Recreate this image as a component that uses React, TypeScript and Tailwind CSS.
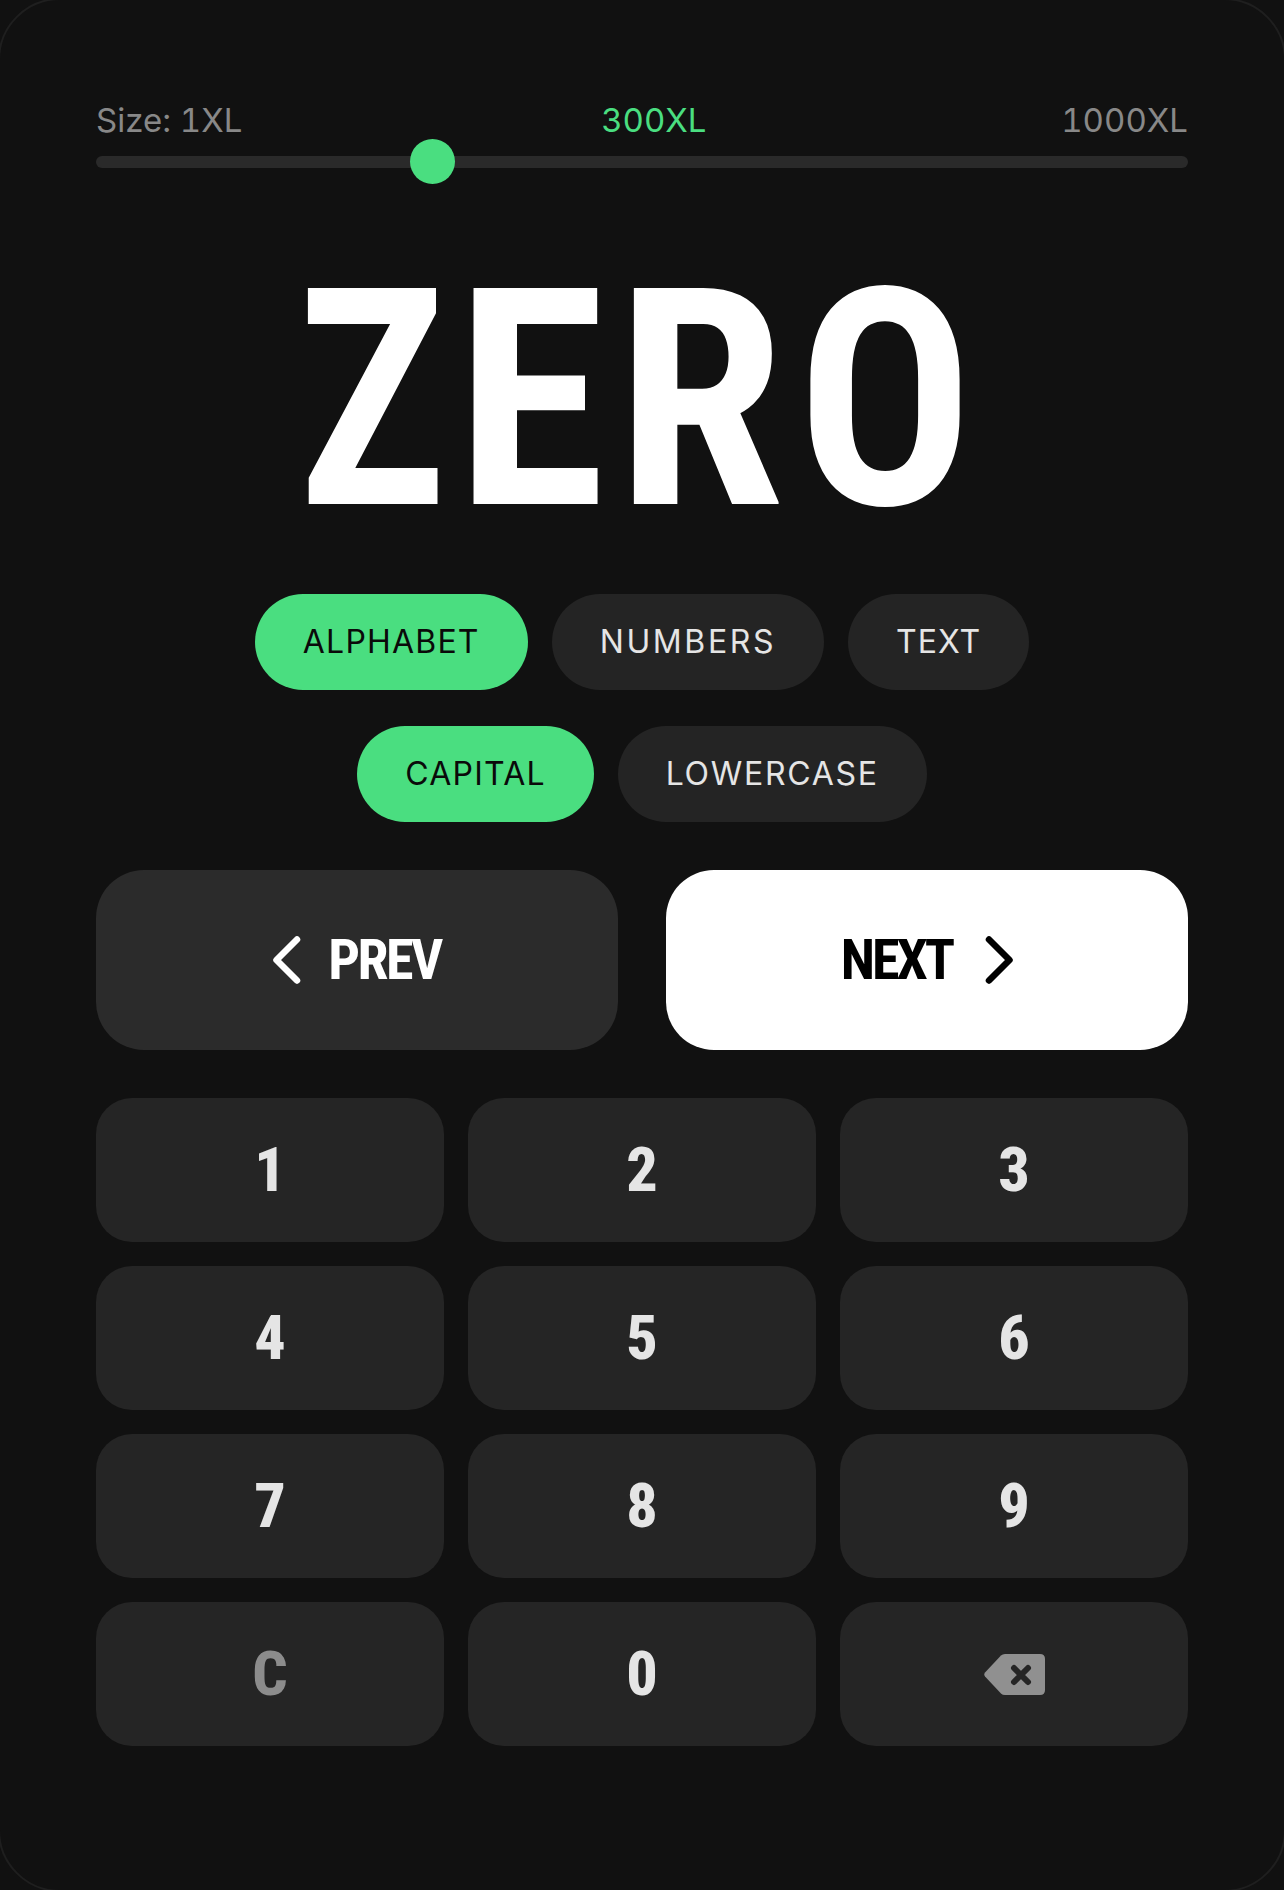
const Pill = ({ label, active, track }: { label: string; active?: boolean; track: string }) => (
  <button
    className={
      "h-24 px-12 rounded-full text-[32px] leading-none font-normal font-['Inter',sans-serif] " +
      track +
      " " +
      (active ? "bg-[#4ade80] text-[#0a0a0a]" : "bg-[#242424] text-[#e5e5e5]")
    }
  >
    {label}
  </button>
);

const Key = ({ children, muted }: { children: React.ReactNode; muted?: boolean }) => (
  <button
    className={
      "h-36 rounded-[36px] bg-[#252525] flex items-center justify-center text-[62px] leading-none font-extrabold font-['Roboto',sans-serif] [font-stretch:75%] " +
      (muted ? "text-[#8c8c8c]" : "text-[#e5e5e5]")
    }
  >
    {children}
  </button>
);

export default function App() {
  return (
    <div className="w-[1284px] h-[1890px] overflow-hidden bg-[#111111]">
      <div className="w-[1288px] h-[1894px] -m-0.5 bg-[#111111] rounded-[62px] border-2 border-[#1f1f1f] px-24 pt-24 font-['Inter',sans-serif] box-border">
        <div className="flex justify-between text-[33px] leading-[48px] font-normal tabular-nums text-[#888888]">
          <span>Size: 1XL</span>
          <span className="text-[#4ade80] ml-1">300XL</span>
          <span>1000XL</span>
        </div>
        <div className="relative mt-3 h-3 rounded-full bg-[#2a2a2a]">
          <div className="absolute left-[314px] top-[-17px] w-[45px] h-[45px] rounded-full bg-[#4ade80]" />
        </div>
        <div className="mt-[82px] mb-[44px] h-[300px] flex items-center justify-center text-white text-[304px] leading-[300px] font-bold tracking-[10px] font-['Roboto',sans-serif] [font-stretch:75%]">
          <span className="inline-block origin-left scale-x-[0.92] mr-[-13.4px]">Z</span>
          <span className="mr-[1px]">E</span>
          <span className="mr-[2.4px]">R</span>
          <span className="inline-block origin-left scale-x-[0.96] mr-[-4.6px]">O</span>
        </div>
        <div className="flex justify-center gap-6">
          <Pill label="ALPHABET" active track="tracking-[1.2px]" />
          <Pill label="NUMBERS" track="tracking-[2.6px]" />
          <Pill label="TEXT" track="tracking-[1px]" />
        </div>
        <div className="flex justify-center gap-6 mt-9">
          <Pill label="CAPITAL" active track="tracking-[1.2px]" />
          <Pill label="LOWERCASE" track="tracking-[1.7px]" />
        </div>
        <div className="grid grid-cols-2 gap-12 mt-12">
          <button className="h-[180px] rounded-[48px] bg-[#2b2b2b] text-white flex items-center justify-center gap-[27px] text-[56px] leading-none font-bold tracking-[-2.5px] font-['Roboto',sans-serif] [font-stretch:75%]">
            <svg width="28" height="48" viewBox="0 0 28 48" fill="none" stroke="currentColor" strokeWidth="6.5" strokeLinecap="round" strokeLinejoin="round">
              <path d="M24 3.5 L3.5 24 L24 44.5" />
            </svg>
            PREV
          </button>
          <button className="h-[180px] rounded-[48px] bg-white text-black flex items-center justify-center gap-[33px] text-[56px] leading-none font-bold tracking-[-3px] font-['Roboto',sans-serif] [font-stretch:75%]">
            NEXT
            <svg width="28" height="48" viewBox="0 0 28 48" fill="none" stroke="currentColor" strokeWidth="6.5" strokeLinecap="round" strokeLinejoin="round">
              <path d="M4 3.5 L24.5 24 L4 44.5" />
            </svg>
          </button>
        </div>
        <div className="grid grid-cols-3 gap-6 mt-12">
          {["1", "2", "3", "4", "5", "6", "7", "8", "9"].map((k) => (
            <Key key={k}>{k}</Key>
          ))}
          <Key muted>C</Key>
          <Key>0</Key>
          <Key muted>
            <svg width="61" height="41" viewBox="0 0 61 41">
              <path d="M17 1.5 Q18.5 0 21 0 H56 Q61 0 61 5 V36 Q61 41 56 41 H21 Q18.5 41 17 39.5 L1 22.5 Q-0.5 20.5 1 18.5 Z" fill="#909090" />
              <path d="M30 14 L44 28 M44 14 L30 28" stroke="#252525" strokeWidth="6" strokeLinecap="round" />
            </svg>
          </Key>
        </div>
      </div>
    </div>
  );
}
